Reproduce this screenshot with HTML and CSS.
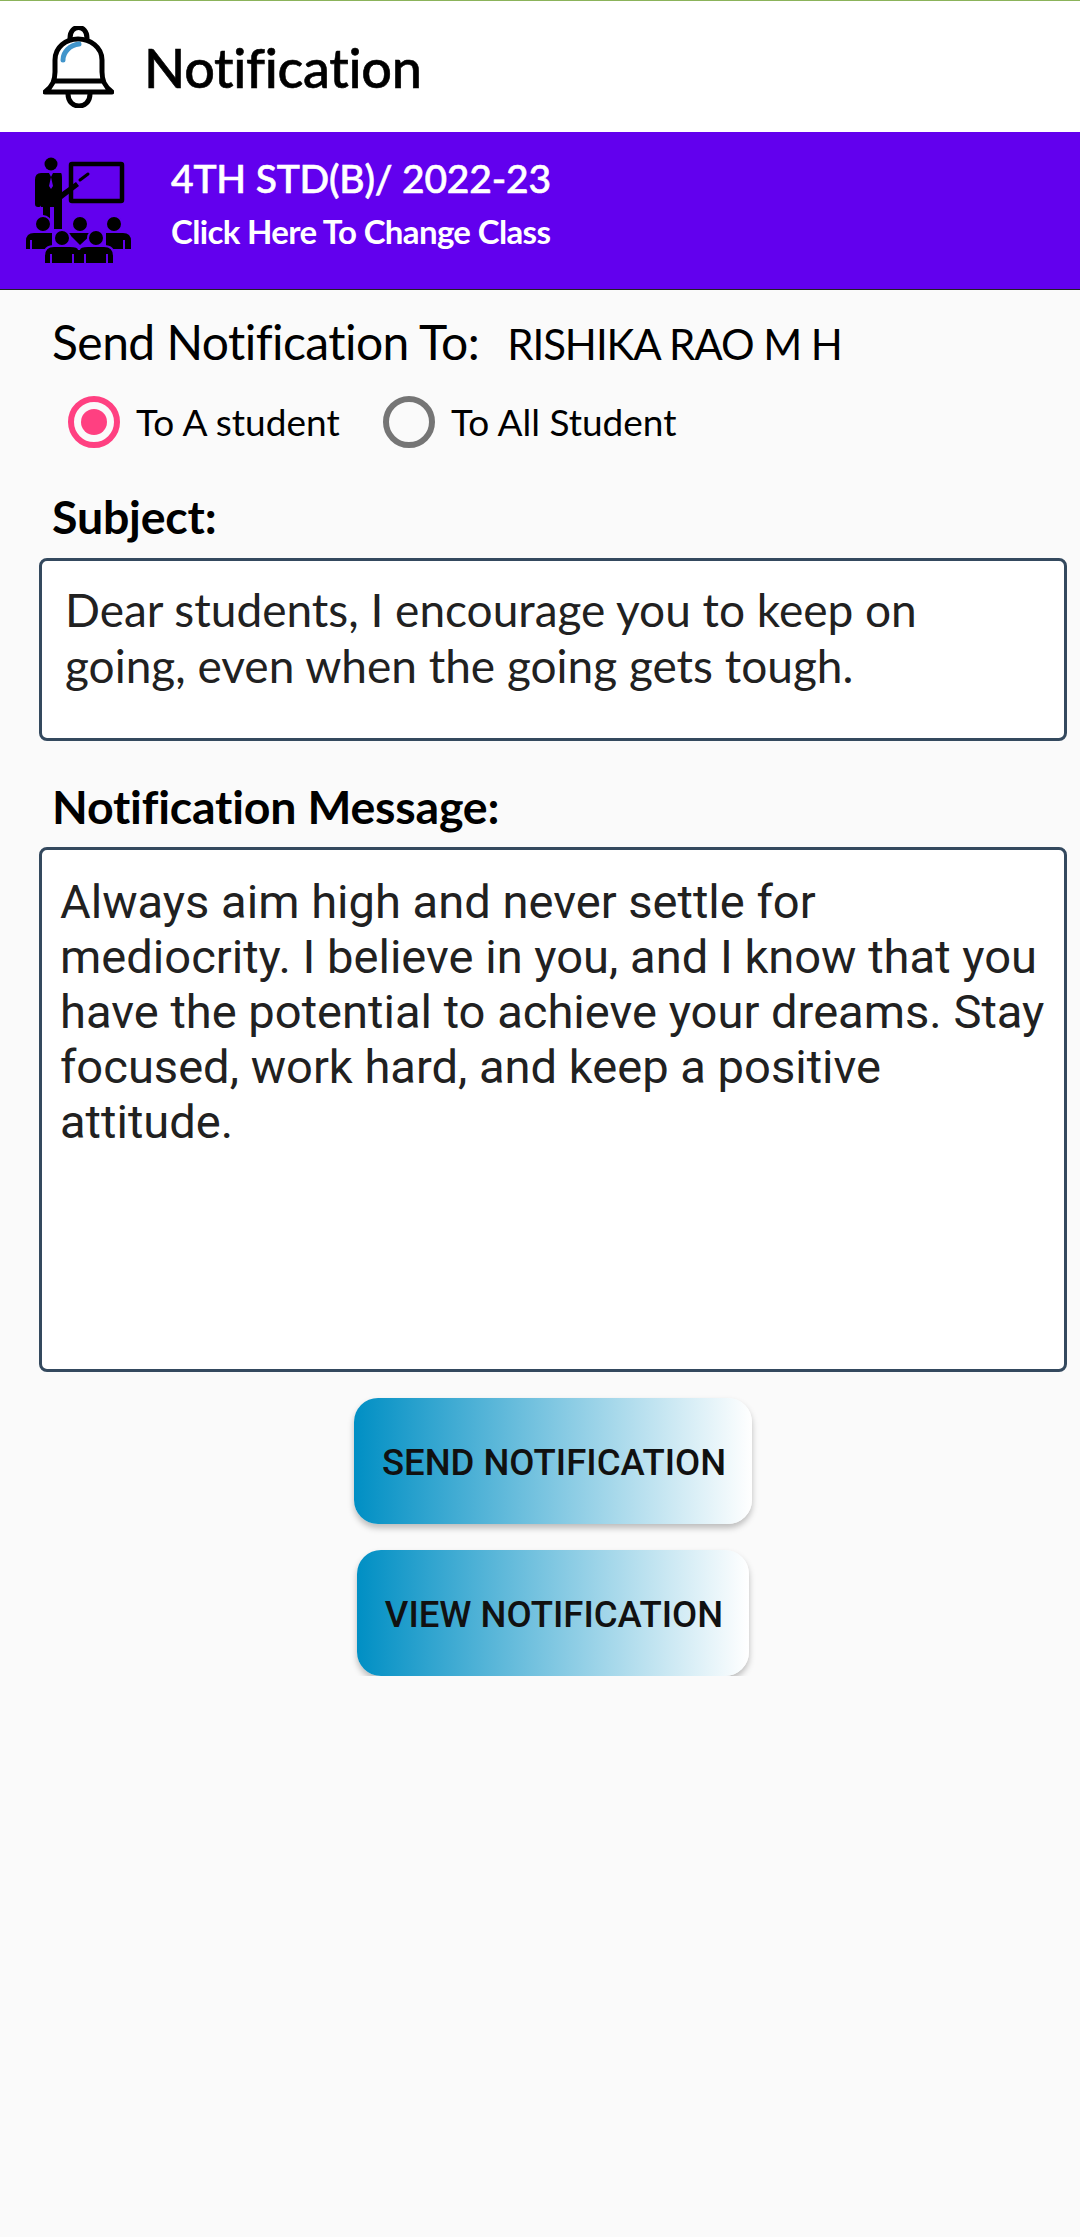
FILE: index.html
```html
<!DOCTYPE html>
<html lang="en">
<head>
    <meta charset="UTF-8">
    <meta name="viewport" content="width=device-width, initial-scale=1.0">
    <title>Notification</title>
    <link rel="stylesheet" href="styles.css">
</head>
<body>

<div class="topbar">
    <svg class="bell" viewBox="43 26 71 82" fill="none" stroke="#000" stroke-width="5" stroke-linejoin="round" stroke-linecap="round">
        <path d="M70 38C70 24 87 24 87 38"/>
        <path d="M45 92C53 86 55 80 55 72V60C55 47 66 39 78 39C90 39 102 47 102 60V72C102 80 104 86 112 92Z"/>
        <path d="M55 81H102"/>
        <path d="M68 94C68 110 90 110 90 94"/>
        <path d="M63 60C63 52 70 45 79 44" stroke="#4195cb"/>
    </svg>
    <h1>Notification</h1>
</div>

<div class="classbar">
    <svg class="class-icon" viewBox="24 155 110 110">
        <rect x="71" y="164" width="51" height="37" fill="none" stroke="#000" stroke-width="4.5" rx="1"/>
        <circle cx="51" cy="164" r="6.5"/>
        <path d="M41 173H61Q62 173 62 180V192L76 182L79 186L62 199V229H54V207H50V220H43V207H41V205Q41 207 38 207Q35 207 35 204V180Q35 173 41 173Z"/>
        <path d="M49 173L51 177L49 186L51 189L53 186L51 177L53 173Z" fill="#6200ee"/>
        <path d="M80 180L88 174" stroke="#000" stroke-width="3" stroke-linecap="round"/>
        <g stroke="#6200ee" stroke-width="2">
            <circle cx="43" cy="224" r="8"/>
            <circle cx="80" cy="224" r="8"/>
            <circle cx="114" cy="224" r="8"/>
        </g>
        <path d="M26 249V241Q26 233 34 233H52V249Z"/>
        <path d="M68 233H93L80 245Z"/>
        <path d="M106 233H123Q131 233 131 241V249H106Z"/>
        <path d="M31 240V249M124 240V249" stroke="#6200ee" stroke-width="2"/>
        <g stroke="#6200ee" stroke-width="2">
            <circle cx="62" cy="238" r="8"/>
            <circle cx="96" cy="238" r="8"/>
            <path d="M44 264V256Q44 246 54 246H70Q79 246 79 250Q79 246 88 246H104Q114 246 114 256V264Z"/>
        </g>
        <path d="M51 254V263M73 254V263M85 254V263M107 254V263" stroke="#6200ee" stroke-width="2"/>
    </svg>
    <div class="class-text">
        <div class="class-name">4TH STD(B)/ 2022-23</div>
        <div class="class-change">Click Here To Change Class</div>
    </div>
</div>

<div class="content">
    <div class="send-to">
        <span class="send-label">Send Notification To:</span>
        <span class="student">RISHIKA RAO M H</span>
    </div>

    <div class="radios">
        <div class="radio-item first">
            <span class="radio checked"></span>
            <span>To A student</span>
        </div>
        <div class="radio-item">
            <span class="radio"></span>
            <span>To All Student</span>
        </div>
    </div>

    <div class="field-label subject-label">Subject:</div>
    <div class="box subject-box">Dear students, I encourage you to keep on going, even when the going gets tough.</div>

    <div class="field-label message-label">Notification Message:</div>
    <div class="box message-box">Always aim high and never settle for mediocrity. I believe in you, and I know that you have the potential to achieve your dreams. Stay focused, work hard, and keep a positive attitude.</div>

    <div class="buttons">
        <button type="button" class="btn btn-send">SEND NOTIFICATION</button>
        <button type="button" class="btn btn-view">VIEW NOTIFICATION</button>
    </div>
</div>

</body>
</html>
```

FILE: styles.css
```css
* {
    box-sizing: border-box;
}
body {
    margin: 0;
    background-color: #fafafa;
    font-family: "Lato", sans-serif;
    color: #000;
}
.topbar {
    height: 132px;
    padding-left: 43px;
    display: flex;
    align-items: center;
    background-color: #fff;
    border-top: 1px solid #8bb35a;
}
.bell {
    width: 71px;
    height: 82px;
}
.topbar h1 {
    margin: 2px 0 0 30px;
    font-family: "Lato Medium", "Lato", sans-serif;
    font-size: 54px;
    font-weight: 500;
    letter-spacing: -0.35px;
    -webkit-text-stroke: 0.6px #000;
}
.classbar {
    height: 158px;
    padding-left: 24px;
    display: flex;
    background-color: #6200ee;
    border-bottom: 1px solid #222;
    color: #fff;
}
.class-icon {
    width: 110px;
    height: 110px;
    margin-top: 23px;
}
.class-text {
    margin-left: 37px;
    padding-top: 22px;
}
.class-name {
    font-size: 39px;
    font-weight: 500;
    line-height: 48px;
    letter-spacing: -0.2px;
    -webkit-text-stroke: 0.6px #fff;
}
.class-change {
    font-size: 33px;
    font-weight: 700;
    line-height: 40px;
    margin-top: 9px;
    letter-spacing: -0.65px;
}
.content {
    padding: 0 13px 0 39px;
}
.send-to {
    display: flex;
    align-items: baseline;
    padding: 23px 0 0 13px;
    height: 88px;
}
.send-label {
    font-size: 48px;
    letter-spacing: -0.55px;
}
.student {
    font-size: 42px;
    margin-left: 28px;
    letter-spacing: -1.05px;
}
.radios {
    display: flex;
    height: 64px;
    margin-top: 18px;
    margin-bottom: 29px;
    padding-left: 29px;
    font-size: 37px;
}
.radio-item {
    display: flex;
    align-items: flex-start;
    height: 52px;
    line-height: 52px;
}
.radio-item.first {
    width: 315px;
}
.radio {
    width: 52px;
    height: 52px;
    margin-right: 16px;
    border: 6px solid #757575;
    border-radius: 50%;
    background-clip: content-box;
}
.radio.checked {
    border-color: #ff4081;
    background-color: #ff4081;
    padding: 7px;
}
.field-label {
    padding-left: 13px;
    font-size: 46.5px;
    font-weight: 700;
    line-height: 54px;
    letter-spacing: -0.2px;
}
.subject-label {
    margin-top: 2px;
}
.message-label {
    margin-top: 38px;
}
.box {
    background-color: #fff;
    border: 3px solid #34495e;
    border-radius: 8px;
    color: #212121;
}
.subject-box {
    height: 183px;
    margin-top: 15px;
    padding: 21px 20px 0 23px;
    font-size: 46px;
    line-height: 55.5px;
}
.message-box {
    height: 525px;
    margin-top: 14px;
    padding: 24px 18px 0 18px;
    font-family: "Roboto", sans-serif;
    font-size: 47.1px;
    line-height: 55px;
}
.buttons {
    display: flex;
    flex-direction: column;
    align-items: center;
    gap: 26px;
    margin-top: 26px;
}
.btn {
    height: 126px;
    padding: 2px 0 0 2px;
    border: none;
    border-radius: 24px;
    background: linear-gradient(to right, #008fc4, #fff);
    color: #111;
    font-family: "Roboto", sans-serif;
    font-size: 36.5px;
    font-weight: 500;
    box-shadow: 0 4px 6px rgba(0, 0, 0, 0.25);
}
.btn-send {
    width: 398px;
}
.btn-view {
    width: 392px;
    clip-path: inset(-10px -10px 0 -10px);
}
```
